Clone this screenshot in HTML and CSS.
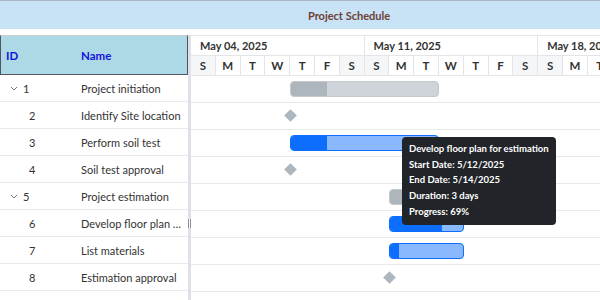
FILE: index.html
```html
<!DOCTYPE html>
<html lang="en">
<head>
	<meta charset="UTF-8">
	<title>Project Schedule</title>
	<link rel="stylesheet" href="styles.css">
</head>
<body>
	<div class="title">Project Schedule</div>
	<div class="gantt">
		<div class="grid">
			<div class="grid-head">
				<span class="col-id">ID</span>
				<span class="col-name">Name</span>
			</div>
			<div class="grid-row">
				<span class="col-id parent"><svg class="chev" width="8" height="5" viewBox="0 0 8 5"><path d="M1 1l3 3 3-3" fill="none" stroke="#777" stroke-width="1"/></svg>1</span>
				<span class="col-name">Project initiation</span>
			</div>
			<div class="grid-row">
				<span class="col-id child">2</span>
				<span class="col-name">Identify Site location</span>
			</div>
			<div class="grid-row">
				<span class="col-id child">3</span>
				<span class="col-name">Perform soil test</span>
			</div>
			<div class="grid-row">
				<span class="col-id child">4</span>
				<span class="col-name">Soil test approval</span>
			</div>
			<div class="grid-row">
				<span class="col-id parent"><svg class="chev" width="8" height="5" viewBox="0 0 8 5"><path d="M1 1l3 3 3-3" fill="none" stroke="#777" stroke-width="1"/></svg>5</span>
				<span class="col-name">Project estimation</span>
			</div>
			<div class="grid-row">
				<span class="col-id child">6</span>
				<span class="col-name">Develop floor plan for estimation</span>
			</div>
			<div class="grid-row">
				<span class="col-id child">7</span>
				<span class="col-name">List materials</span>
			</div>
			<div class="grid-row">
				<span class="col-id child">8</span>
				<span class="col-name">Estimation approval</span>
			</div>
		</div>
		<div class="splitter"><span class="handle"></span></div>
		<div class="chart">
			<div class="tier weeks">
				<div class="week">May 04, 2025</div>
				<div class="week">May 11, 2025</div>
				<div class="week">May 18, 2025</div>
			</div>
			<div class="tier days">
				<div class="day wkend">S</div><div class="day">M</div><div class="day">T</div><div class="day">W</div><div class="day">T</div><div class="day">F</div><div class="day wkend">S</div>
				<div class="day wkend">S</div><div class="day">M</div><div class="day">T</div><div class="day">W</div><div class="day">T</div><div class="day">F</div><div class="day wkend">S</div>
				<div class="day wkend">S</div><div class="day">M</div><div class="day">T</div>
			</div>
			<div class="chart-row">
				<div class="bar summary" style="left:99px;width:149px"><div class="progress" style="width:36px"></div></div>
			</div>
			<div class="chart-row">
				<div class="milestone" style="left:99px"></div>
			</div>
			<div class="chart-row">
				<div class="bar task" style="left:99px;width:149px"><div class="progress" style="width:36px"></div></div>
			</div>
			<div class="chart-row">
				<div class="milestone" style="left:99px"></div>
			</div>
			<div class="chart-row">
				<div class="bar summary" style="left:198px;width:75px"><div class="progress" style="width:30px"></div></div>
			</div>
			<div class="chart-row">
				<div class="bar task" style="left:198px;width:75px"><div class="progress" style="width:52px"></div></div>
			</div>
			<div class="chart-row">
				<div class="bar task" style="left:198px;width:75px"><div class="progress" style="width:9px"></div></div>
			</div>
			<div class="chart-row">
				<div class="milestone" style="left:198px"></div>
			</div>
			<div class="tooltip">
				<div>Develop floor plan for estimation</div>
				<div>Start Date: 5/12/2025</div>
				<div>End Date: 5/14/2025</div>
				<div>Duration: 3 days</div>
				<div>Progress: 69%</div>
			</div>
		</div>
	</div>
</body>
</html>
```

FILE: styles.css
```css
body{
	margin:0;
	font-family:Lato, "Liberation Sans", sans-serif;
	font-size:11px;
	color:#333;
	background:#fff;
}
.title{
	height:28px;
	line-height:29px;
	padding-left:98px;
	border-top:1px solid #a9b8c6;
	background:#c8e2f6;
	text-align:center;
	font-weight:bold;
	font-size:11px;
	color:#6e4034;
}
.gantt{
	display:flex;
	margin-top:6px;
	height:265px;
	overflow:hidden;
}
.grid{
	width:188px;
	flex:none;
}
.grid-head{
	display:flex;
	align-items:center;
	height:38px;
	background:#add8e6;
	border:1px solid #50565c;
	border-top-color:#c8cdd2;
	font-weight:bold;
	font-size:11.5px;
	color:#1313d8;
}
.grid-head .col-id{
	padding-left:5px;
	width:75px;
	color:#1313d8;
}
.grid-row{
	display:flex;
	align-items:center;
	height:26px;
	border-bottom:1px solid #e8e9eb;
	white-space:nowrap;
}
.col-id{
	width:81px;
	flex:none;
	color:#333;
}
.col-id.parent{
	display:flex;
	align-items:center;
	padding-left:10px;
	width:71px;
}
.chev{
	margin-right:5px;
}
.col-id.child{
	padding-left:29px;
	width:52px;
}
.col-name{
	overflow:hidden;
	text-overflow:ellipsis;
	flex:1;
	padding-right:5px;
}
.splitter{
	position:relative;
	width:3px;
	flex:none;
	background:#dfe1e6;
}
.handle{
	position:absolute;
	left:0;
	top:184px;
	width:1px;
	height:9px;
	border-left:1px solid #8a8f96;
	border-right:1px solid #8a8f96;
	background:#fff;
}
.chart{
	position:relative;
	flex:1;
	overflow:hidden;
}
.tier{
	display:flex;
	height:19px;
	border-top:1px solid #e3e5e8;
	white-space:nowrap;
	font-weight:bold;
}
.week{
	width:173.6px;
	flex:none;
	box-sizing:border-box;
	padding-left:9px;
	line-height:19px;
	font-size:11px;
	border-right:1px solid #e3e5e8;
}
.days{
	border-bottom:1px solid #e3e5e8;
}
.day{
	width:24.8px;
	flex:none;
	box-sizing:border-box;
	text-align:center;
	line-height:19px;
	font-size:11.5px;
	border-right:1px solid #e3e5e8;
}
.day.wkend{
	background:#f5f6f8;
}
.chart-row{
	position:relative;
	height:26px;
	border-bottom:1px solid #e8e9eb;
}
.bar{
	position:absolute;
	top:5px;
	height:16px;
	border-radius:4px;
	overflow:hidden;
	box-sizing:border-box;
}
.bar.summary{
	background:#ced4da;
	border:1px solid #c4c9ce;
}
.bar.summary .progress{
	background:#adb5bd;
}
.bar.task{
	background:#8ab8fd;
	border:1px solid #0d6efd;
}
.bar.task .progress{
	background:#0d6efd;
}
.progress{
	height:100%;
}
.milestone{
	position:absolute;
	top:8px;
	width:9px;
	height:9px;
	margin-left:-4px;
	background:#adb5bd;
	transform:rotate(45deg);
}
.tooltip{
	position:absolute;
	left:211px;
	top:102px;
	padding:4px 7px 5px;
	background:#212529;
	border-radius:4px;
	color:#fff;
	font-size:9.5px;
	font-weight:bold;
	line-height:15.7px;
	white-space:nowrap;
}
```
